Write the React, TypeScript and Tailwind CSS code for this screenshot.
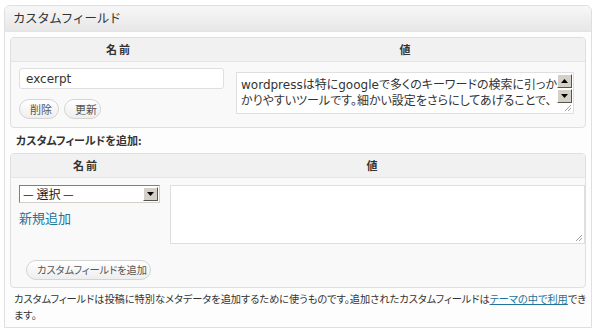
import React from "react";

const jp = "font-['Noto_Sans_CJK_JP',sans-serif] [font-feature-settings:'palt']";
const mixed = "font-['DejaVu_Sans','Noto_Sans_CJK_JP',sans-serif] [font-feature-settings:'palt']";

function PillButton({ label, className = "" }: { label: string; className?: string }) {
  return (
    <button
      className={`h-[20px] whitespace-nowrap rounded-full border border-[#d4d4d4] bg-gradient-to-b from-white to-[#eeeeee] px-[10px] leading-none text-[#555] ${jp} ${className}`}
    >
      {label}
    </button>
  );
}

function Grip() {
  return (
    <svg width="9" height="9" viewBox="0 0 9 9" className="absolute bottom-[1px] right-[1px]">
      <path d="M8 2 L2 8 M8 5 L5 8" stroke="#a0a0a0" strokeWidth="1" />
    </svg>
  );
}

function ArrowBtn({ down }: { down?: boolean }) {
  return (
    <div className="flex h-[14px] w-[15px] items-center justify-center border border-t-white border-l-white border-r-[#555] border-b-[#555] bg-[#d4d0c8]">
      <svg width="7" height="4" viewBox="0 0 7 4">
        <path d={down ? "M0 0 H7 L3.5 4 Z" : "M0 4 H7 L3.5 0 Z"} fill="#000" />
      </svg>
    </div>
  );
}

function App() {
  return (
    <div className="h-[335px] w-[600px] bg-white pl-[4px] pt-[5px]">
      <div className="flex h-[323px] w-[588px] flex-col rounded-t-[6px] border border-[#dfdfdf] bg-[#fdfdfd]">
        {/* header */}
        <div className="flex h-[26px] shrink-0 items-center rounded-t-[6px] border-b border-[#e4e4e4] bg-gradient-to-b from-[#f7f7f7] to-[#e7e7e7] pl-[8px] font-['Noto_Sans_CJK_JP',sans-serif] text-[12.5px] leading-none tracking-[-0.4px] text-[#333]">
          カスタムフィールド
        </div>

        <div className="flex flex-col px-[5px] pt-[5px]">
          {/* existing field table */}
          <div className="overflow-hidden rounded-[4px] border border-[#dfdfdf] bg-[#f9f9f9]">
            <div className={`flex h-[24px] items-center border-b border-[#e6e6e6] bg-[#f1f1f1] text-[11px] font-bold tracking-[2px] text-[#333] ${jp}`}>
              <div className="w-[216px] text-center">名前</div>
              <div className="flex-1 text-center">値</div>
            </div>
            <div className="flex h-[65px]">
              <div className="flex w-[216px] flex-col pl-[8px] pt-[6px]">
                <div className={`flex h-[21px] w-[205px] items-center rounded-[3px] border border-[#dfdfdf] bg-white pl-[6px] text-[12px] text-[#333] ${mixed}`}>
                  excerpt
                </div>
                <div className="mt-[10px] flex gap-[5px]">
                  <PillButton label="削除" className="w-[40px] px-0 text-[11px]" />
                  <PillButton label="更新" className="w-[37px] px-0 text-[11px]" />
                </div>
              </div>
              <div className="flex-1 pl-[9px] pt-[10px]">
                <div className="relative h-[42px] w-[338px] border border-[#dfdfdf] bg-white">
                  <div className={`pl-[4px] pt-[4px] text-[12px] leading-[16px] whitespace-nowrap text-[#333] ${mixed}`}>
                    <div>wordpressは特にgoogleで多くのキーワードの検索に引っか</div>
                    <div>かりやすいツールです。細かい設定をさらにしてあげることで、</div>
                  </div>
                  <div className="absolute right-[1px] top-[1px] flex flex-col gap-[1px]">
                    <ArrowBtn />
                    <ArrowBtn down />
                  </div>
                  <Grip />
                </div>
              </div>
            </div>
          </div>

          <div className={`mt-[4px] flex h-[17px] items-center pl-[6px] text-[11px] font-bold text-[#333] ${jp}`}>
            カスタムフィールドを追加:
          </div>

          {/* add new field table */}
          <div className="mt-[4px] overflow-hidden rounded-[4px] border border-[#dfdfdf] bg-[#f9f9f9]">
            <div className={`flex h-[24px] items-center border-b border-[#e6e6e6] bg-[#f1f1f1] text-[11px] font-bold tracking-[2px] text-[#333] ${jp}`}>
              <div className="w-[150px] text-center">名前</div>
              <div className="flex-1 text-center">値</div>
            </div>
            <div className="flex pt-[7px]">
              <div className="flex w-[159px] flex-col pl-[8px]">
                <div className={`flex h-[18px] w-[141px] items-center justify-between border border-t-[#808080] border-l-[#808080] border-r-[#d4d0c8] border-b-[#d4d0c8] bg-white text-[12px] text-[#222] ${jp}`}>
                  <span className="pl-[3px]">— 選択 —</span>
                  <div className="mr-[1px] flex h-[14px] w-[15px] items-center justify-center border border-t-white border-l-white border-r-[#555] border-b-[#555] bg-[#d4d0c8]">
                    <svg width="7" height="4" viewBox="0 0 7 4">
                      <path d="M0 0 H7 L3.5 4 Z" fill="#000" />
                    </svg>
                  </div>
                </div>
                <a className={`mt-[6px] text-[13px] leading-[18px] text-[#21759b] ${jp}`}>新規追加</a>
              </div>
              <div className="relative h-[59px] flex-1 border border-[#dfdfdf] bg-white">
                <Grip />
              </div>
            </div>
            <div className="pb-[7px] pl-[15px] pt-[12px]">
              <PillButton label="カスタムフィールドを追加" className="w-[125px] px-0 text-[10.2px]" />
            </div>
          </div>

          <div className={`mt-[3px] pl-[4px] text-[10.2px] leading-[16px] text-[#333] ${jp}`}>
            <div className="whitespace-nowrap">
              カスタムフィールドは投稿に特別なメタデータを追加するために使うものです。追加されたカスタムフィールドは
              <a className="text-[#21759b] underline">テーマの中で利用</a>でき
            </div>
            <div>ます。</div>
          </div>
        </div>
      </div>
    </div>
  );
}

export default App;
